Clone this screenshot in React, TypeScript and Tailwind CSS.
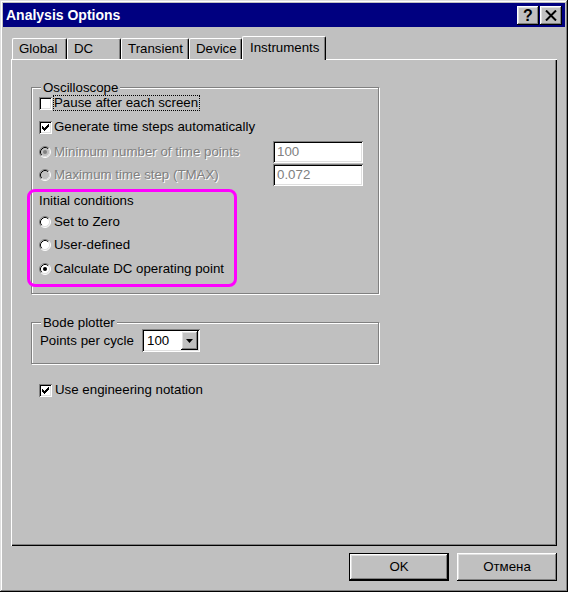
import React from 'react';

const raised = 'shadow-[inset_-1px_-1px_#000,inset_1px_1px_#fff,inset_-2px_-2px_#808080,inset_2px_2px_#dfdfdf]';
const sunken = 'shadow-[inset_1px_1px_#808080,inset_-1px_-1px_#fff,inset_2px_2px_#000,inset_-2px_-2px_#dfdfdf]';
const disabledText = 'text-[#808080] [text-shadow:1px_1px_0_#fff]';

function CheckBox({ checked }: { checked?: boolean }) {
  return (
    <span className={`w-[13px] h-[13px] bg-white shrink-0 flex items-center justify-center ${sunken}`}>
      {checked && (
        <svg width="7" height="7" viewBox="0 0 7 7" shapeRendering="crispEdges">
          <path
            fill="#000"
            d="M6 0h1v1h-1z M5 1h2v1h-2z M0 2h1v1h-1z M4 2h3v1h-3z M0 3h2v1h-2z M3 3h3v1h-3z M0 4h5v1h-5z M1 5h3v1h-3z M2 6h1v1h-1z"
          />
        </svg>
      )}
    </span>
  );
}

function Radio({ checked, disabled }: { checked?: boolean; disabled?: boolean }) {
  return (
    <svg width="12" height="12" viewBox="0 0 12 12" className="shrink-0">
      <circle cx="6" cy="6" r="5" fill={disabled ? '#c0c0c0' : '#fff'} />
      <path d="M2.11 9.89A5.5 5.5 0 0 1 9.89 2.11" fill="none" stroke="#808080" />
      <path d="M9.89 2.11A5.5 5.5 0 0 1 2.11 9.89" fill="none" stroke="#fff" />
      <path d="M2.82 9.18A4.5 4.5 0 0 1 9.18 2.82" fill="none" stroke="#000" />
      <path d="M9.18 2.82A4.5 4.5 0 0 1 2.82 9.18" fill="none" stroke="#dfdfdf" />
      {checked && <circle cx="6" cy="6" r="2" fill={disabled ? '#808080' : '#000'} />}
    </svg>
  );
}

function Tab({ label, w }: { label: string; w: string }) {
  return (
    <div
      className={`${w} h-[21px] flex items-center pl-[6px] border-t border-l border-r border-t-white border-l-white border-r-black rounded-t-[2px] shadow-[inset_-1px_0_#808080]`}
    >
      {label}
    </div>
  );
}

export default function App() {
  return (
    <div
      className={`w-[568px] h-[592px] bg-[#c0c0c0] p-[3px] flex flex-col text-[13.3px] text-black font-['Liberation_Sans',Arial,sans-serif] shadow-[inset_-1px_-1px_#000,inset_1px_1px_#dfdfdf,inset_-2px_-2px_#808080,inset_2px_2px_#fff]`}
    >
      {/* title bar */}
      <div className="h-[24px] bg-[#000080] flex items-center pl-[3px] pr-[3px] shrink-0">
        <span className="flex-1 text-white font-bold text-[14px] leading-none">Analysis Options</span>
        <div className="flex gap-[1px]">
          <div className={`w-[22px] h-[19px] bg-[#c0c0c0] ${raised} flex items-center justify-center font-bold text-[16px] leading-none pt-[1px]`}>
            ?
          </div>
          <div className={`w-[22px] h-[19px] bg-[#c0c0c0] ${raised} flex items-center justify-center`}>
            <svg width="12" height="11" viewBox="0 0 12 11">
              <path d="M1 0.5 L11 10.5 M11 0.5 L1 10.5" stroke="#000" strokeWidth="2" />
            </svg>
          </div>
        </div>
      </div>

      {/* tabs + page */}
      <div className="px-[8px] mt-[9px] flex flex-col">
        <div className="flex items-end h-[23px] pl-[1px]">
          <Tab label="Global" w="w-[55px]" />
          <Tab label="DC" w="w-[54px]" />
          <Tab label="Transient" w="w-[68px]" />
          <Tab label="Device" w="w-[53px]" />
          <div className="relative z-10 -mb-[1px] w-[84px] h-[24px] bg-[#c0c0c0] flex items-center pl-[7px] pb-[2px] border-t border-l border-r border-t-white border-l-white border-r-black rounded-t-[2px] shadow-[inset_-1px_0_#808080]">
            Instruments
          </div>
        </div>

        <div className="h-[487px] bg-[#c0c0c0] pt-[21px] pl-[20px] flex flex-col items-start shadow-[inset_1px_1px_#fff,inset_-1px_-1px_#000,inset_-2px_-2px_#808080]">
          {/* Oscilloscope */}
          <fieldset className="w-[348px] border border-[#808080] pl-[7px] pb-[6px] shadow-[1px_1px_0_#fff,inset_1px_1px_0_#fff]">
            <legend className="ml-[2px] px-[2px] leading-[15px] bg-[#c0c0c0]">Oscilloscope</legend>

            <div className="flex items-center h-[16px]">
              <CheckBox />
              <span className="ml-[1px] h-[16px] pr-[1px] border border-dotted border-black leading-[14px]">
                Pause after each screen
              </span>
            </div>

            <div className="flex items-center h-[16px] mt-[8px]">
              <CheckBox checked />
              <span className="ml-[2px]">Generate time steps automatically</span>
            </div>

            <div className="flex items-center h-[22px] mt-[6px]">
              <div className="w-[234px] flex items-center">
                <Radio checked disabled />
                <span className={`ml-[3px] ${disabledText}`}>Minimum number of time points</span>
              </div>
              <div className={`w-[90px] h-[22px] bg-white ${sunken} flex items-center pl-[4px] text-[#808080]`}>100</div>
            </div>

            <div className="flex items-center h-[22px] mt-[1px]">
              <div className="w-[234px] flex items-center">
                <Radio disabled />
                <span className={`ml-[3px] ${disabledText}`}>Maximum time step (TMAX)</span>
              </div>
              <div className={`w-[90px] h-[22px] bg-white ${sunken} flex items-center pl-[4px] text-[#808080]`}>0.072</div>
            </div>

            {/* highlighted: initial conditions */}
            <div className="mt-[3px] -ml-[12px] w-[210px] h-[98px] border-[3px] border-[#ff00ff] rounded-[8px] pl-[9px] pt-[1px]">
              <div className="leading-[15px]">Initial conditions</div>
              <div className="flex items-center h-[16px] mt-[6px]">
                <Radio />
                <span className="ml-[3px]">Set to Zero</span>
              </div>
              <div className="flex items-center h-[16px] mt-[7px]">
                <Radio />
                <span className="ml-[3px]">User-defined</span>
              </div>
              <div className="flex items-center h-[16px] mt-[8px]">
                <Radio checked />
                <span className="ml-[3px]">Calculate DC operating point</span>
              </div>
            </div>
          </fieldset>

          {/* Bode plotter */}
          <fieldset className="mt-[21px] w-[348px] border border-[#808080] pl-[8px] pb-[11px] shadow-[1px_1px_0_#fff,inset_1px_1px_0_#fff]">
            <legend className="ml-[1px] px-[2px] leading-[15px] bg-[#c0c0c0]">Bode plotter</legend>
            <div className="flex items-center h-[23px] -mt-[1px]">
              <span className="w-[102px]">Points per cycle</span>
              <div className={`w-[58px] h-[23px] bg-white ${sunken} flex items-center justify-between pl-[5px] pr-[2px]`}>
                <span>100</span>
                <div className={`w-[17px] h-[19px] bg-[#c0c0c0] ${raised} flex items-center justify-center`}>
                  <svg width="7" height="4" viewBox="0 0 7 4">
                    <path d="M0 0H7L3.5 4Z" fill="#000" />
                  </svg>
                </div>
              </div>
            </div>
          </fieldset>

          <div className="flex items-center h-[16px] mt-[18px] ml-[8px]">
            <CheckBox checked />
            <span className="ml-[3px]">Use engineering notation</span>
          </div>
        </div>
      </div>

      {/* dialog buttons */}
      <div className="flex justify-end gap-[8px] mt-[7px] pr-[8px]">
        <button className={`w-[100px] h-[28px] bg-[#c0c0c0] border border-black ${raised} flex items-center justify-center`}>
          OK
        </button>
        <button className={`w-[100px] h-[28px] bg-[#c0c0c0] ${raised} flex items-center justify-center`}>
          Отмена
        </button>
      </div>
    </div>
  );
}
